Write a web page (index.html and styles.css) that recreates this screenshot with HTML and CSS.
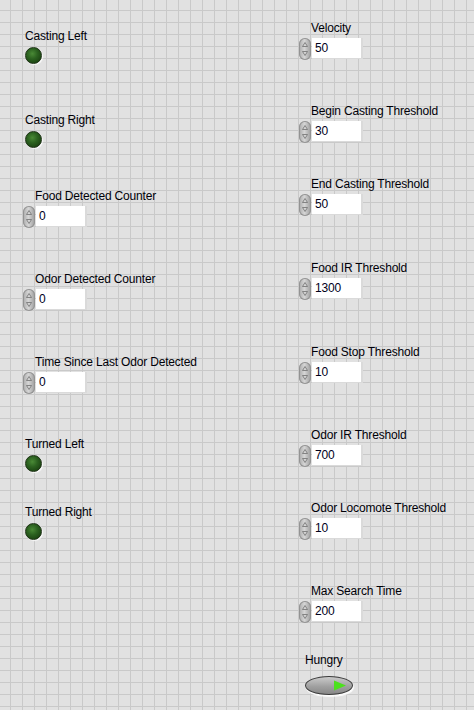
FILE: index.html
```html
<!DOCTYPE html>
<html>
<head>
<meta charset="utf-8">
<link rel="stylesheet" href="styles.css">
</head>
<body>
<div class="panel">
  <div class="col col-left">
    <div class="item led-item casting-left"><div class="label">Casting Left</div><div class="led"></div></div>
    <div class="item led-item casting-right"><div class="label">Casting Right</div><div class="led"></div></div>
    <div class="item num food-counter"><div class="label">Food Detected Counter</div><div class="numeric"><span class="spin"><svg width="12" height="22" viewBox="0 0 12 22"><path class="arr" d="M3.5 8.5 L6 4.5 L8.5 8.5 Z"/><path class="arr" d="M3.5 13.5 L6 17.5 L8.5 13.5 Z"/></svg></span><span class="field">0</span></div></div>
    <div class="item num odor-counter"><div class="label">Odor Detected Counter</div><div class="numeric"><span class="spin"><svg width="12" height="22" viewBox="0 0 12 22"><path class="arr" d="M3.5 8.5 L6 4.5 L8.5 8.5 Z"/><path class="arr" d="M3.5 13.5 L6 17.5 L8.5 13.5 Z"/></svg></span><span class="field">0</span></div></div>
    <div class="item num time-since"><div class="label">Time Since Last Odor Detected</div><div class="numeric"><span class="spin"><svg width="12" height="22" viewBox="0 0 12 22"><path class="arr" d="M3.5 8.5 L6 4.5 L8.5 8.5 Z"/><path class="arr" d="M3.5 13.5 L6 17.5 L8.5 13.5 Z"/></svg></span><span class="field">0</span></div></div>
    <div class="item led-item turned-left"><div class="label">Turned Left</div><div class="led"></div></div>
    <div class="item led-item turned-right"><div class="label">Turned Right</div><div class="led"></div></div>
  </div>
  <div class="col col-right">
    <div class="item num velocity"><div class="label">Velocity</div><div class="numeric"><span class="spin"><svg width="12" height="22" viewBox="0 0 12 22"><path class="arr" d="M3.5 8.5 L6 4.5 L8.5 8.5 Z"/><path class="arr" d="M3.5 13.5 L6 17.5 L8.5 13.5 Z"/></svg></span><span class="field">50</span></div></div>
    <div class="item num begin-cast"><div class="label">Begin Casting Threshold</div><div class="numeric"><span class="spin"><svg width="12" height="22" viewBox="0 0 12 22"><path class="arr" d="M3.5 8.5 L6 4.5 L8.5 8.5 Z"/><path class="arr" d="M3.5 13.5 L6 17.5 L8.5 13.5 Z"/></svg></span><span class="field">30</span></div></div>
    <div class="item num end-cast"><div class="label">End Casting Threshold</div><div class="numeric"><span class="spin"><svg width="12" height="22" viewBox="0 0 12 22"><path class="arr" d="M3.5 8.5 L6 4.5 L8.5 8.5 Z"/><path class="arr" d="M3.5 13.5 L6 17.5 L8.5 13.5 Z"/></svg></span><span class="field">50</span></div></div>
    <div class="item num food-ir"><div class="label">Food IR Threshold</div><div class="numeric"><span class="spin"><svg width="12" height="22" viewBox="0 0 12 22"><path class="arr" d="M3.5 8.5 L6 4.5 L8.5 8.5 Z"/><path class="arr" d="M3.5 13.5 L6 17.5 L8.5 13.5 Z"/></svg></span><span class="field">1300</span></div></div>
    <div class="item num food-stop"><div class="label">Food Stop Threshold</div><div class="numeric"><span class="spin"><svg width="12" height="22" viewBox="0 0 12 22"><path class="arr" d="M3.5 8.5 L6 4.5 L8.5 8.5 Z"/><path class="arr" d="M3.5 13.5 L6 17.5 L8.5 13.5 Z"/></svg></span><span class="field">10</span></div></div>
    <div class="item num odor-ir"><div class="label">Odor IR Threshold</div><div class="numeric"><span class="spin"><svg width="12" height="22" viewBox="0 0 12 22"><path class="arr" d="M3.5 8.5 L6 4.5 L8.5 8.5 Z"/><path class="arr" d="M3.5 13.5 L6 17.5 L8.5 13.5 Z"/></svg></span><span class="field">700</span></div></div>
    <div class="item num odor-loco"><div class="label">Odor Locomote Threshold</div><div class="numeric"><span class="spin"><svg width="12" height="22" viewBox="0 0 12 22"><path class="arr" d="M3.5 8.5 L6 4.5 L8.5 8.5 Z"/><path class="arr" d="M3.5 13.5 L6 17.5 L8.5 13.5 Z"/></svg></span><span class="field">10</span></div></div>
    <div class="item num max-search"><div class="label">Max Search Time</div><div class="numeric"><span class="spin"><svg width="12" height="22" viewBox="0 0 12 22"><path class="arr" d="M3.5 8.5 L6 4.5 L8.5 8.5 Z"/><path class="arr" d="M3.5 13.5 L6 17.5 L8.5 13.5 Z"/></svg></span><span class="field">200</span></div></div>
    <div class="item bool hungry"><div class="label">Hungry</div><div class="switch"><svg width="14" height="11" viewBox="0 0 14 11"><path d="M1 0.5 L13 5.5 L1 10.5 Z" fill="#4be11c"/></svg></div></div>
  </div>
</div>
</body>
</html>
```
FILE: styles.css
```css
html, body {
  margin: 0;
  padding: 0;
}
body {
  width: 474px;
  height: 710px;
  overflow: hidden;
  background-color: #e1e1e1;
  background-image:
    linear-gradient(to right, #c9c9c9 1px, transparent 1px),
    linear-gradient(to bottom, #c9c9c9 1px, transparent 1px);
  background-size: 12px 12px;
  background-position: 10px 10px;
  font-family: "Liberation Sans", Arial, sans-serif;
  font-size: 12px;
  letter-spacing: -0.18px;
  color: #000008;
}
.panel {
  display: flex;
}
.col {
  display: flex;
  flex-direction: column;
  align-items: flex-start;
}
.col-left {
  width: 276px;
  padding-left: 23px;
}
.label {
  line-height: 14px;
  height: 14px;
  white-space: nowrap;
}
.led-item {
  padding-left: 2px;
}
.led-item .label {
  margin-bottom: 4px;
}
.led {
  width: 17px;
  height: 17px;
  box-sizing: border-box;
  border-radius: 50%;
  border: 1px solid #1e3316;
  background: radial-gradient(circle at 42% 38%, #4a8a36 0%, #2c6220 40%, #1d4713 75%, #173a0f 100%);
  box-shadow: 1px 1px 1px rgba(255,255,255,0.9);
}
.num .label {
  padding-left: 12px;
  margin-bottom: 3px;
}
.numeric {
  display: flex;
  align-items: flex-start;
}
.spin {
  width: 12px;
  height: 22px;
  border-radius: 6px;
  background: linear-gradient(to right, #a9a9a9, #d6d6d6 45%, #9c9c9c);
  box-shadow: inset 0 0 0 1px #939393;
}
.spin svg {
  display: block;
}
.arr {
  fill: #d4d4d4;
  stroke: #6e6e6e;
  stroke-width: 0.8;
}
.field {
  width: 51px;
  height: 21px;
  margin-top: 0;
  margin-left: 1px;
  box-sizing: border-box;
  padding-left: 3px;
  line-height: 21px;
  background: #ffffff;
  box-shadow: inset -2px -1px 0 #dadada;
  color: #00001a;
}
.hungry {
  padding-left: 6px;
}
.hungry .label {
  margin-bottom: 9px;
}
.switch {
  width: 48px;
  height: 19px;
  box-sizing: border-box;
  border-radius: 50%;
  border: 1px solid #3b3b3b;
  background: linear-gradient(to bottom, #cacaca, #a0a0a0 55%, #888888);
  box-shadow: 1px 2px 1px rgba(255,255,255,0.9);
  display: flex;
  align-items: center;
  justify-content: flex-end;
  padding-right: 5px;
}
.switch svg {
  display: block;
}

/* left column vertical placement */
.casting-left { margin-top: 29px; }
.casting-right { margin-top: 49px; }
.food-counter { margin-top: 41px; }
.odor-counter { margin-top: 44px; }
.time-since { margin-top: 44px; }
.turned-left { margin-top: 43px; }
.turned-right { margin-top: 33px; }

/* right column vertical placement */
.velocity { margin-top: 21px; }
.begin-cast { margin-top: 44px; }
.end-cast { margin-top: 34px; }
.food-ir { margin-top: 45px; }
.food-stop { margin-top: 45px; }
.odor-ir { margin-top: 44px; }
.odor-loco { margin-top: 34px; }
.max-search { margin-top: 44px; }
.hungry { margin-top: 30px; }
```
